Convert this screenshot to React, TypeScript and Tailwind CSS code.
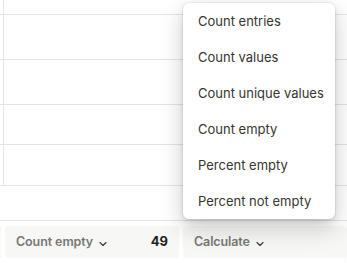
import { ChevronDown } from "lucide-react";

const rows = [
  { h: "h-[15px]", side: true },
  { h: "h-[45px]", side: true },
  { h: "h-[45px]", side: true },
  { h: "h-[40px]", side: true },
  { h: "h-[41px]", side: true },
  { h: "h-[35px]", side: false },
];

const options = [
  "Count entries",
  "Count values",
  "Count unique values",
  "Count empty",
  "Percent empty",
  "Percent not empty",
];

export default function App() {
  return (
    <div
      className="relative w-[347px] h-[263px] overflow-hidden bg-white"
      style={{ fontFamily: "Inter, 'Noto Sans', sans-serif" }}
    >
      <div className="flex flex-col">
        {rows.map((r, i) => (
          <div key={i} className={`flex ${r.h} border-b border-[#e4e4e2]`}>
            <div className={`w-[4px] ${r.side ? "border-r border-[#e4e4e2]" : ""}`} />
            <div className="flex-1" />
          </div>
        ))}
      </div>

      {/* footer calculations */}
      <div className="flex gap-[4px] mt-[5px] -ml-[3px]">
        <div className="w-[4px] h-[32px] rounded-[4px] bg-[#f7f7f5]" />
        <div className="w-[174px] h-[32px] rounded-[4px] bg-[#f7f7f5] flex items-center px-[11px]">
          <span className="text-[12.5px] font-semibold tracking-[-0.1px] text-[#787774]">Count empty</span>
          <ChevronDown className="w-[12px] h-[12px] ml-[4px] mt-[3px] text-[#37352f]" strokeWidth={2.2} />
          <span className="ml-auto text-[13px] font-bold text-[#1f1f1f]">49</span>
        </div>
        <div className="flex-1 h-[32px] rounded-[4px] bg-[#f7f7f5] flex items-center px-[11px]">
          <span className="text-[12.5px] font-semibold tracking-[-0.1px] text-[#787774]">Calculate</span>
          <ChevronDown className="w-[12px] h-[12px] ml-[4px] mt-[3px] text-[#37352f]" strokeWidth={2.2} />
        </div>
      </div>

      {/* dropdown menu */}
      <div className="absolute left-[183px] top-[3px] w-[152px] rounded-[6px] bg-white shadow-[0_0_0_1px_rgba(15,15,15,0.05),0_3px_6px_rgba(15,15,15,0.1),0_9px_24px_rgba(15,15,15,0.2)] flex flex-col">
        {options.map((o) => (
          <div key={o} className="h-[36px] flex items-center pl-[15px] pt-[1px] text-[13px] text-[#37352f]">
            {o}
          </div>
        ))}
      </div>
    </div>
  );
}
